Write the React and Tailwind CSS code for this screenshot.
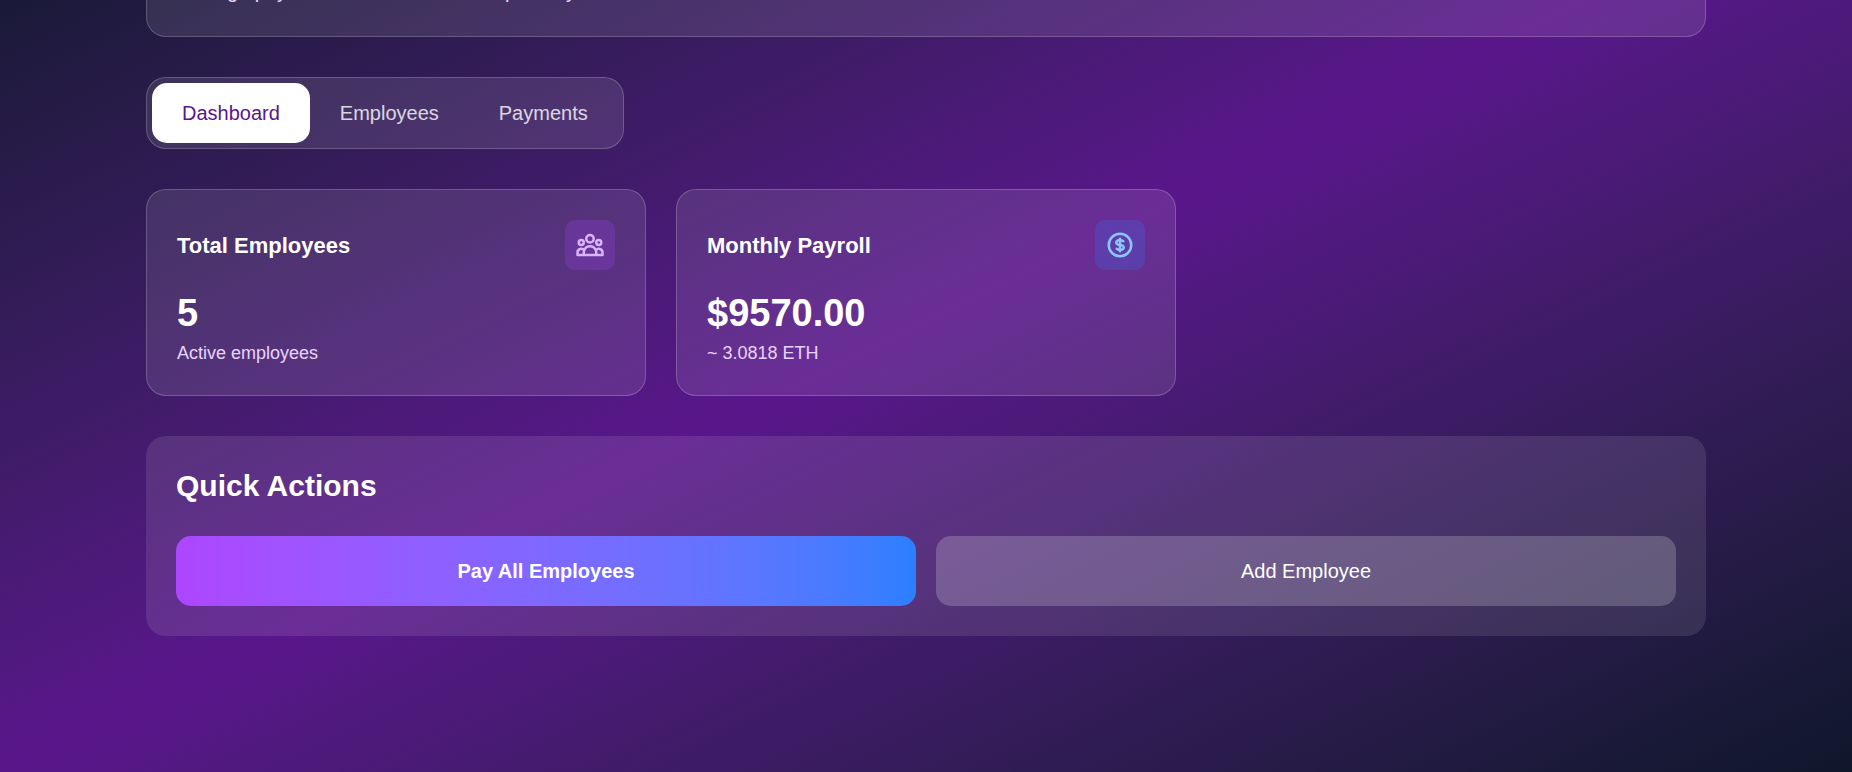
import { useState } from 'react'

const tabs = ['Dashboard', 'Employees', 'Payments']

const stats = [
  {
    title: 'Total Employees',
    value: '5',
    note: 'Active employees',
    box: 'bg-purple-500/20 text-purple-300',
    icon: 'M17 20h5v-2a3 3 0 00-5.356-1.857M17 20H7m10 0v-2c0-.656-.126-1.283-.356-1.857M7 20H2v-2a3 3 0 015.356-1.857M7 20v-2c0-.656.126-1.283.356-1.857m0 0a5.002 5.002 0 019.288 0M15 7a3 3 0 11-6 0 3 3 0 016 0zm6 3a2 2 0 11-4 0 2 2 0 014 0zM7 10a2 2 0 11-4 0 2 2 0 014 0z'
  },
  {
    title: 'Monthly Payroll',
    value: '$9570.00',
    note: '~ 3.0818 ETH',
    box: 'bg-blue-500/20 text-blue-300',
    icon: 'M12 8c-1.657 0-3 .895-3 2s1.343 2 3 2 3 .895 3 2-1.343 2-3 2m0-8c1.11 0 2.08.402 2.599 1M12 8V7m0 1v8m0 0v1m0-1c-1.11 0-2.08-.402-2.599-1M21 12a9 9 0 11-18 0 9 9 0 0118 0z'
  }
]

function StatCard({ title, value, note, box, icon }) {
  return (
    <div className="bg-white/10 border border-white/20 rounded-[20px] p-[30px]">
      <div className="flex items-center justify-between mb-5">
        <h3 className="text-[22px] leading-[35px] font-semibold">{title}</h3>
        <div className={`rounded-[10px] p-[10px] ${box}`}>
          <svg className="size-[30px]" fill="none" stroke="currentColor" viewBox="0 0 24 24">
            <path strokeLinecap="round" strokeLinejoin="round" strokeWidth="2" d={icon} />
          </svg>
        </div>
      </div>
      <p className="text-[38px] leading-[47px] font-bold">{value}</p>
      <p className="mt-1 text-[18px] leading-[24px] text-purple-200">{note}</p>
    </div>
  )
}

function App() {
  const [activeTab, setActiveTab] = useState('Dashboard')

  return (
    // the page is scrolled down past the top of the header
    <div className="overflow-hidden">
      <div className="-mt-[130px] min-h-[calc(100vh+130px)] bg-gradient-to-br from-slate-900 via-purple-900 to-slate-900 font-['Liberation_Sans',Arial,sans-serif] text-[20px] leading-[30px] text-white">
        <div className="max-w-[1600px] mx-auto px-5 pt-5 pb-10">
          <header className="bg-white/10 border border-white/20 rounded-[20px] p-[30px] mb-10">
            <h1 className="text-[38px] leading-[45px] font-bold mb-[10px]">Payroll</h1>
            <p className="text-purple-200">Manage payroll with blockchain transparency</p>
          </header>

          <nav className="flex w-fit bg-white/10 border border-white/20 rounded-[20px] p-[5px] mb-10">
            {
              tabs.map(tab => (
                <button
                  key={tab}
                  onClick={() => setActiveTab(tab)}
                  className={`px-[30px] py-[15px] rounded-[15px] font-medium ${activeTab === tab ? 'bg-white text-purple-900' : 'text-white/80'}`}
                >
                  {tab}
                </button>
              ))
            }
          </nav>

          <div className="grid grid-cols-1 md:grid-cols-3 gap-[30px] mb-10">
            {stats.map(stat => <StatCard key={stat.title} {...stat} />)}
          </div>

          <section className="bg-white/10 rounded-[20px] p-[30px]">
            <h2 className="text-[30px] leading-[40px] font-bold mb-[30px]">Quick Actions</h2>
            <div className="grid grid-cols-1 md:grid-cols-2 gap-5">
              <button className="bg-gradient-to-r from-purple-500 to-blue-500 rounded-[15px] py-5 font-semibold">
                Pay All Employees
              </button>
              <button className="bg-white/20 rounded-[15px] py-5 font-medium">
                Add Employee
              </button>
            </div>
          </section>
        </div>
      </div>
    </div>
  )
}

export default App
